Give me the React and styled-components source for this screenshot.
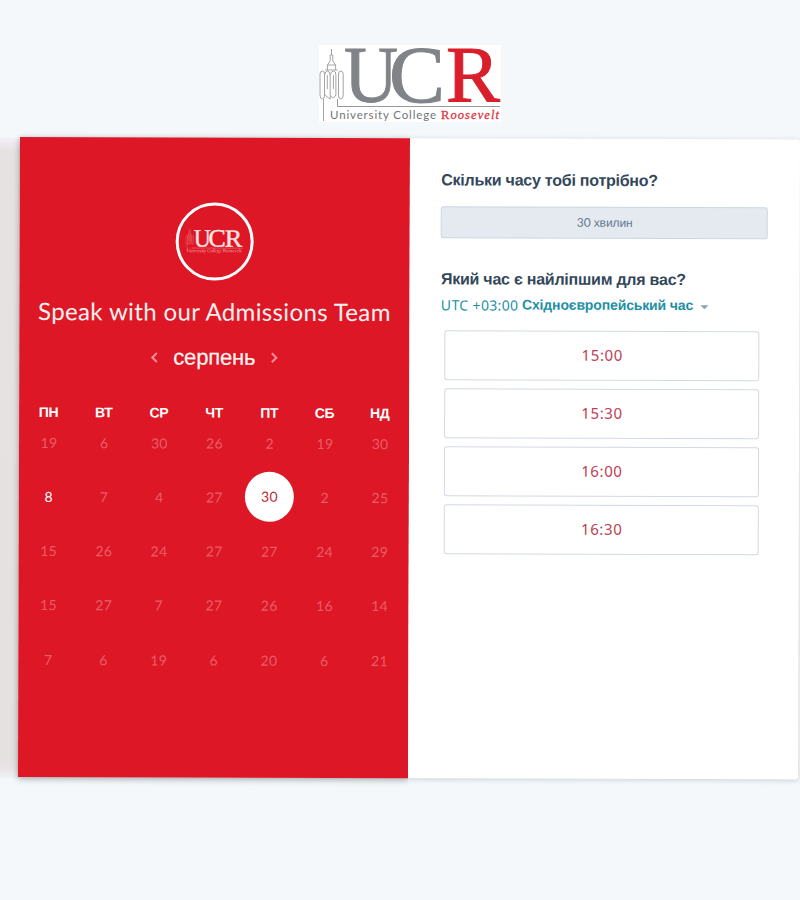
import React from 'react';
import styled, { createGlobalStyle, css } from 'styled-components';

const RED = '#dd1725';

const GlobalStyle = createGlobalStyle`
  body {
    margin: 0;
    background: #f4f8fb;
    font-family: 'Liberation Sans', Arial, sans-serif;
    overflow: hidden;
  }
`;

const Page = styled.div`
  width: 800px;
  height: 900px;
  overflow: hidden;
`;

const Header = styled.header`
  height: 137px;
  padding: 45px 0 0 319px;
  box-sizing: border-box;

  svg {
    display: block;
    overflow: visible;
  }
`;

const Stage = styled.main`
  display: flex;
  height: 641px;
`;

const Backdrop = styled.div`
  flex: none;
  width: 20px;
  background: linear-gradient(#f3f4f9 0, #efeaf2 5px, #e6e2e2 14px, #e5e1e1 620px, #e9e1e6 630px, #eef2f4 641px);
`;

const Card = styled.section`
  display: flex;
  flex: none;
  width: 780px;
  height: 640px;
  transform: rotate(0.18deg);
  transform-origin: 0 0;
  background: #fff;
  border-radius: 0 3px 3px 0;
  box-shadow: 0 1px 5px rgba(45, 62, 80, 0.22);
`;

const CalendarPanel = styled.div`
  width: 390px;
  height: 640px;
  padding-top: 65px;
  box-sizing: border-box;
  background: ${RED};
  box-shadow: 0 2px 7px rgba(45, 50, 50, 0.25);
  clip-path: inset(-10px 0 -12px -10px);
  color: #fff;
  display: flex;
  flex-direction: column;
  align-items: center;
`;

const Avatar = styled.div`
  width: 78px;
  height: 78px;
  box-sizing: border-box;
  border: 3px solid #fff;
  border-radius: 50%;
  display: flex;
  align-items: center;
  justify-content: center;

  svg {
    overflow: visible;
  }
`;

const Title = styled.h1`
  margin: 13px 0 0;
  font: 400 24px/36px Lato, sans-serif;
  letter-spacing: 0.36px;
  white-space: nowrap;
  color: #fff0f0;
`;

const MonthBar = styled.div`
  display: flex;
  align-items: center;
  justify-content: center;
  gap: 15px;
  height: 30px;
  margin-top: 13px;
`;

const Month = styled.span`
  font-size: 22px;
  line-height: 30px;
  letter-spacing: -0.15px;
  color: #fff4f4;
  -webkit-text-stroke: 0.2px #fff4f4;
`;

const ArrowButton = styled.button`
  display: flex;
  padding: 0;
  border: 0;
  background: none;
  color: #f38f95;
`;

const Week = styled.div`
  display: grid;
  grid-template-columns: repeat(7, 55.2px);
  justify-items: center;
  align-items: center;
  height: 54.25px;
`;

const WeekHeader = styled(Week)`
  height: 20px;
  margin: 30px 0 -7px;
  font-size: 14px;
  font-weight: 700;
  letter-spacing: -0.3px;
`;

const Day = styled.span`
  display: flex;
  align-items: center;
  justify-content: center;
  width: 49px;
  height: 50px;
  padding-left: 1px;
  box-sizing: border-box;
  border-radius: 50%;
  font: 400 14px Lato, sans-serif;
  letter-spacing: 0.3px;
  color: #ea5c65;
  ${(p) => p.$state === 'open' && css`color: #fff;`}
  ${(p) => p.$state === 'selected' && css`
    padding-bottom: 2px;
    background: #fff;
    color: #b92a38;
  `}
`;

const BookingPanel = styled.div`
  width: 327px;
  padding: 30px 31px 0 31.4px;
`;

const Question = styled.h2`
  margin: 0;
  font-size: 16px;
  line-height: 24px;
  letter-spacing: -0.24px;
  color: #33475b;
  white-space: nowrap;
`;

const Duration = styled.div`
  height: 32px;
  margin: 13.5px 0 29.5px;
  box-sizing: border-box;
  border: 1px solid #cbd6e2;
  border-radius: 3px;
  background: #e5eaf0;
  color: #64788f;
  text-align: center;
  font: 12px/30px Lato, 'Liberation Sans', sans-serif;
`;

const Cyrillic = styled.span`
  font-family: 'Liberation Sans', sans-serif;
  letter-spacing: -0.1px;
`;

const Timezone = styled.button`
  display: flex;
  align-items: center;
  height: 24px;
  margin: 1px 0 0;
  padding: 0;
  border: 0;
  background: none;
  color: #1e8fa5;
  white-space: nowrap;
  font: 400 14px 'Noto Sans', sans-serif;
  letter-spacing: 0.36px;
`;

const ZoneName = styled.strong`
  margin-left: 3.5px;
  font: 700 14px 'Liberation Sans', sans-serif;
  letter-spacing: -0.14px;
`;

const Caret = styled.span`
  margin: 3px 0 0 7px;
  border: 4px solid transparent;
  border-top-color: #8ba1b7;
  border-bottom: 0;
`;

const Slots = styled.div`
  display: grid;
  gap: 8px;
  margin: 14px 8px 0 4px;
`;

const Slot = styled.button`
  height: 50px;
  padding: 0 0 2px;
  border: 1px solid #d3d9e3;
  border-radius: 3px;
  background: #fff;
  color: #bd4052;
  font: 400 15px 'Noto Sans', sans-serif;
  letter-spacing: 0.6px;
`;

const Tower = ({ color }) => (
  <g fill="none" stroke={color} strokeWidth="1">
    <path d="M12.5 4v6M11.2 10h2.6v6l2.8 4v5M11.2 10v6l-2.8 4v5M8.4 20h8.2M6.2 25h12.5" />
    <path d="M1 29q0-3 2.3-3t2.2 3v21q0 4-2.2 4T1 50zM5.5 30q1-4 3-4t2.7 4v24l-3-2-2.7-3M11.2 30q1-4 3.3-4t2.4 4v20l-2.4 3-3.3-2M19.5 29q0-3 2.3-3t2.4 3v21q0 4-2.4 4t-2.3-4z" />
    <path d="M8.3 30v14M14.4 30v14M4.5 54v22" />
  </g>
);

const HeaderLogo = () => (
  <svg width="182" height="77" viewBox="0 0 182 77" role="img">
    <rect width="182" height="77" fill="#fff" />
    <Tower color="#a3a4a6" />
    <path d="M18.5 54v7.5H181" fill="none" stroke="#98999b" strokeWidth="1" />
    <g fontFamily="Liberation Serif, serif" fontSize="81">
      <text x="25" y="56.5" textLength="54" lengthAdjust="spacingAndGlyphs" fill="#808388" stroke="#808388" strokeWidth="1">U</text>
      <text x="70" y="56.5" textLength="56" lengthAdjust="spacingAndGlyphs" fill="#808388" stroke="#808388" strokeWidth="1">C</text>
      <text x="127" y="56.5" textLength="54" lengthAdjust="spacingAndGlyphs" fill="#d91f2b" stroke="#d91f2b" strokeWidth="1">R</text>
    </g>
    <text x="11" y="74" textLength="106" fontFamily="Lato, sans-serif" fontSize="11.5" fill="#737579">University College</text>
    <text x="122" y="74" textLength="58" fontFamily="Liberation Serif, serif" fontSize="12.5" fill="#dc3640" stroke="#dc3640" strokeWidth=".3">
      R<tspan fontStyle="italic">oosevelt</tspan>
    </text>
  </svg>
);

const AvatarLogo = () => (
  <svg width="58" height="28" viewBox="0 0 58 28">
    <g transform="scale(.32 .31)" opacity=".55"><Tower color="#fff" /></g>
    <g fontFamily="Liberation Serif, serif" fontSize="25" fill="#ffe5e6" stroke="#ffe5e6" strokeWidth=".4">
      <text x="8" y="19" textLength="17" lengthAdjust="spacingAndGlyphs">U</text>
      <text x="22.5" y="19" textLength="17.5" lengthAdjust="spacingAndGlyphs">C</text>
      <text x="39" y="19" textLength="17.5" lengthAdjust="spacingAndGlyphs">R</text>
    </g>
    <path d="M6 20.5h51" stroke="#f18990" strokeWidth=".5" />
    <text x="1" y="24.6" textLength="55" fontFamily="Liberation Serif, serif" fontSize="5" fill="#f8a9ae">University College Roosevelt</text>
  </svg>
);

const Chevron = ({ d }) => (
  <svg width="8" height="12" viewBox="0 0 8 12" fill="none" stroke="currentColor" strokeWidth="2">
    <path d={d} />
  </svg>
);

const weekdays = ['ПН', 'ВТ', 'СР', 'ЧТ', 'ПТ', 'СБ', 'НД'];
const weeks = [
  [19, 6, 30, 26, 2, 19, 30],
  [8, 7, 4, 27, 30, 2, 25],
  [15, 26, 24, 27, 27, 24, 29],
  [15, 27, 7, 27, 26, 16, 14],
  [7, 6, 19, 6, 20, 6, 21],
];
const times = ['15:00', '15:30', '16:00', '16:30'];

const dayState = (week, day) => {
  if (week !== 1) return undefined;
  return { 0: 'open', 4: 'selected' }[day];
};

export default function App() {
  return (
    <Page>
      <GlobalStyle />
      <Header><HeaderLogo /></Header>
      <Stage>
        <Backdrop />
        <Card>
          <CalendarPanel>
            <Avatar><AvatarLogo /></Avatar>
            <Title>Speak with our Admissions Team</Title>
            <MonthBar>
              <ArrowButton><Chevron d="M6.5 1.5 2 6l4.5 4.5" /></ArrowButton>
              <Month>серпень</Month>
              <ArrowButton><Chevron d="M1.5 1.5 6 6l-4.5 4.5" /></ArrowButton>
            </MonthBar>
            <WeekHeader>
              {weekdays.map((name) => <span key={name}>{name}</span>)}
            </WeekHeader>
            {weeks.map((week, w) => (
              <Week key={w}>
                {week.map((day, d) => <Day key={d} $state={dayState(w, d)}>{day}</Day>)}
              </Week>
            ))}
          </CalendarPanel>
          <BookingPanel>
            <Question>Скільки часу тобі потрібно?</Question>
            <Duration>30 <Cyrillic>хвилин</Cyrillic></Duration>
            <Question>Який час є найліпшим для вас?</Question>
            <Timezone>
              UTC +03:00 <ZoneName>Східноєвропейський час</ZoneName><Caret />
            </Timezone>
            <Slots>
              {times.map((time) => <Slot key={time}>{time}</Slot>)}
            </Slots>
          </BookingPanel>
        </Card>
      </Stage>
    </Page>
  );
}
